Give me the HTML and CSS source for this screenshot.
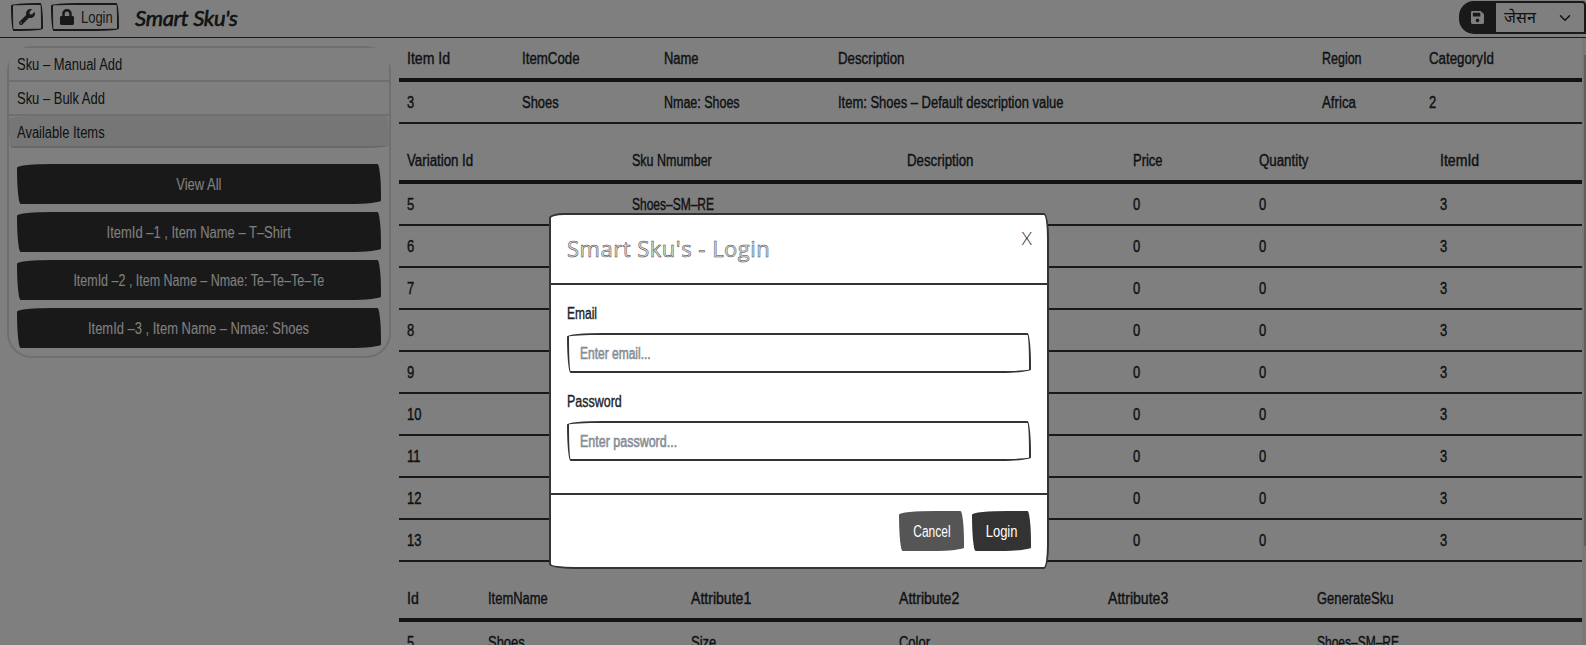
FILE: index.html
```html
<!DOCTYPE html>
<html lang="en">
<head>
<meta charset="utf-8">
<title>Smart Sku's</title>
<link rel="stylesheet" href="styles.css">
</head>
<body>
<header class="navbar">
  <button class="tool" aria-label="Settings"><svg class="icon" width="16" height="16" viewBox="0 0 512 512"><path fill="currentColor" d="M507.7 109.100c-2.200-9-13.500-12.100-20.100-5.500l-74.400 74.400-67.900-11.300L334 98.800l74.400-74.400c6.600-6.600 3.400-17.900-5.700-20.200-47.400-11.700-99.600.9-136.600 37.900-39.600 39.600-50.500 97.100-34.100 147.200L18.700 402.800c-25 25-25 65.500 0 90.500 25 25 65.500 25 90.500 0l213.200-213.200c50.100 16.700 107.500 5.700 147.400-34.200 37.100-37.100 49.700-89.300 37.900-136.800zM64 472c-13.300 0-24-10.700-24-24 0-13.300 10.700-24 24-24s24 10.700 24 24c0 13.300-10.700 24-24 24z"/></svg></button>
  <button class="tool tool-login"><svg class="icon" width="14" height="16" viewBox="0 0 448 512"><path fill="currentColor" d="M400 224h-24v-72C376 68.200 307.800 0 224 0S72 68.200 72 152v72H48c-26.500 0-48 21.500-48 48v192c0 26.500 21.500 48 48 48h352c26.500 0 48-21.500 48-48V272c0-26.500-21.500-48-48-48zm-104 0H152v-72c0-39.700 32.300-72 72-72s72 32.300 72 72v72z"/></svg><span class="t">Login</span></button>
  <span class="brand">Smart Sku's</span>
  <div class="theme">
    <span class="theme-save"><svg width="13" height="13" viewBox="0 0 448 448"><path fill="currentColor" fill-rule="evenodd" d="M434 98 350 14C341 5 329 0 316 0H48C21 0 0 21 0 48v352c0 27 21 48 48 48h352c27 0 48-21 48-48V132c0-13-5-25-14-34zM224 384a64 64 0 1 1 0-128 64 64 0 0 1 0 128zM320 80v100c0 7-5 12-12 12H76c-7 0-12-5-12-12V76c0-7 5-12 12-12h228c9 0 16 7 16 16z"/></svg></span>
    <span class="theme-select"><span>जेसन</span><svg width="12" height="12" viewBox="0 0 16 16"><path fill="none" stroke="currentColor" stroke-width="2" stroke-linecap="round" stroke-linejoin="round" d="m2 5 6 6 6-6"/></svg></span>
  </div>
</header>
<div class="page">
  <aside class="sidebar">
    <div class="side-item"><span class="t">Sku – Manual Add</span></div>
    <div class="side-item"><span class="t">Sku – Bulk Add</span></div>
    <div class="side-item active"><span class="t">Available Items</span></div>
    <div class="side-body">
      <button class="btn wide"><span class="t">View All</span></button>
      <button class="btn wide"><span class="t">ItemId –1 , Item Name – T–Shirt</span></button>
      <button class="btn wide"><span class="t narrow">ItemId –2 , Item Name – Nmae: Te–Te–Te–Te</span></button>
      <button class="btn wide"><span class="t">ItemId –3 , Item Name – Nmae: Shoes</span></button>
    </div>
  </aside>
  <main class="content">
    <table class="items">
      <colgroup><col><col><col><col><col><col></colgroup>
      <thead><tr><th><span class="t roomy">Item Id</span></th><th><span class="t mid">ItemCode</span></th><th><span class="t">Name</span></th><th><span class="t mid">Description</span></th><th><span class="t narrow">Region</span></th><th><span class="t mid">CategoryId</span></th></tr></thead>
      <tbody><tr><td><span class="t">3</span></td><td><span class="t">Shoes</span></td><td><span class="t narrow">Nmae: Shoes</span></td><td><span class="t">Item: Shoes – Default description value</span></td><td><span class="t mid">Africa</span></td><td><span class="t">2</span></td></tr></tbody>
    </table>
    <table class="variations">
      <colgroup><col><col><col><col><col><col></colgroup>
      <thead><tr><th><span class="t mid">Variation Id</span></th><th><span class="t narrow">Sku Nmumber</span></th><th><span class="t mid">Description</span></th><th><span class="t">Price</span></th><th><span class="t mid">Quantity</span></th><th><span class="t roomy">ItemId</span></th></tr></thead>
      <tbody>
        <tr><td><span class="t">5</span></td><td><span class="t tight">Shoes–SM–RE</span></td><td></td><td><span class="t">0</span></td><td><span class="t">0</span></td><td><span class="t">3</span></td></tr>
        <tr><td><span class="t">6</span></td><td></td><td></td><td><span class="t">0</span></td><td><span class="t">0</span></td><td><span class="t">3</span></td></tr>
        <tr><td><span class="t">7</span></td><td></td><td></td><td><span class="t">0</span></td><td><span class="t">0</span></td><td><span class="t">3</span></td></tr>
        <tr><td><span class="t">8</span></td><td></td><td></td><td><span class="t">0</span></td><td><span class="t">0</span></td><td><span class="t">3</span></td></tr>
        <tr><td><span class="t">9</span></td><td></td><td></td><td><span class="t">0</span></td><td><span class="t">0</span></td><td><span class="t">3</span></td></tr>
        <tr><td><span class="t">10</span></td><td></td><td></td><td><span class="t">0</span></td><td><span class="t">0</span></td><td><span class="t">3</span></td></tr>
        <tr><td><span class="t">11</span></td><td></td><td></td><td><span class="t">0</span></td><td><span class="t">0</span></td><td><span class="t">3</span></td></tr>
        <tr><td><span class="t">12</span></td><td></td><td></td><td><span class="t">0</span></td><td><span class="t">0</span></td><td><span class="t">3</span></td></tr>
        <tr><td><span class="t">13</span></td><td></td><td></td><td><span class="t">0</span></td><td><span class="t">0</span></td><td><span class="t">3</span></td></tr>
      </tbody>
    </table>
    <table class="attributes">
      <colgroup><col><col><col><col><col><col></colgroup>
      <thead><tr><th><span class="t roomy">Id</span></th><th><span class="t">ItemName</span></th><th><span class="t roomy">Attribute1</span></th><th><span class="t roomy">Attribute2</span></th><th><span class="t roomy">Attribute3</span></th><th><span class="t">GenerateSku</span></th></tr></thead>
      <tbody><tr><td><span class="t">5</span></td><td><span class="t">Shoes</span></td><td><span class="t">Size</span></td><td><span class="t">Color</span></td><td></td><td><span class="t tight">Shoes–SM–RE</span></td></tr></tbody>
    </table>
  </main>
  <div class="scrollbar"><div class="thumb"></div></div>
</div>
<div class="backdrop">
  <section class="modal">
    <div class="modal-header"><h5 class="modal-title">Smart Sku's - Login</h5><span class="close">X</span></div>
    <div class="modal-body">
      <div class="label"><span class="t tight">Email</span></div>
      <div class="input"><span class="t tight">Enter email...</span></div>
      <div class="label"><span class="t narrow">Password</span></div>
      <div class="input"><span class="t narrow">Enter password...</span></div>
    </div>
    <div class="modal-footer"><button class="btn secondary"><span class="t tight">Cancel</span></button><button class="btn submit"><span class="t">Login</span></button></div>
  </section>
</div>
</body>
</html>
```
FILE: styles.css
```css
* { box-sizing: border-box; }
body {
  margin: 0; height: 645px; overflow: hidden; background: #fff; color: #212529;
  font: 16px/24px "Liberation Sans", sans-serif;
}
button { font: inherit; }
svg { flex: none; }
/* condensed lettering */
.t { display: inline-block; white-space: nowrap; transform: translateY(.5px) scaleX(.81); transform-origin: 0 50%; }
.t.tight { transform: translateY(.5px) scaleX(.75); }
.t.narrow { transform: translateY(.5px) scaleX(.78); }
.t.mid { transform: translateY(.5px) scaleX(.83); }
.t.roomy { transform: translateY(.5px) scaleX(.88); }
.navbar { display: flex; align-items: flex-start; height: 38px; padding: 3px 0 0 11px; border-bottom: 1px solid #333; }
.tool {
  display: flex; align-items: center; justify-content: center; width: 32px; height: 28px; margin-right: 8px; padding: 0;
  border: 2px solid #333; background: #fff; color: #333;
  border-radius: 255px 25px 225px 25px / 25px 225px 25px 255px;
}
.tool-login { justify-content: flex-start; width: 68px; gap: 7px; padding-left: 7px; margin-right: 16px; }
.brand { font: italic 400 22px/29px Lato, sans-serif; letter-spacing: -.3px; -webkit-text-stroke: .6px; }
.theme { display: flex; width: 127px; height: 33px; margin: -2px 0 0 auto; }
.theme-save { display: flex; align-items: center; justify-content: center; width: 37px; background: #333; color: #fff; border-radius: 15px 0 0 15px; }
.theme-select {
  display: flex; align-items: center; justify-content: space-between; flex: 1; padding: 0 13px 0 8px;
  border: 2px solid #333; border-left: 0; border-radius: 0 4px 0 0;
}
.page { display: flex; height: 607px; overflow: hidden; }
.sidebar { width: 384px; height: 312px; margin: 8px 8px 0 7px; border: 2px solid #dfdfdf; border-radius: 25px; }
.side-item { height: 34px; padding: 4px 8px; background: #fff; border-bottom: 2px solid #dfdfdf; }
.side-item.active { height: 32px; background: #ececec; border-color: #d2d2d2; border-radius: 255px 25px 225px 25px / 25px 225px 25px 255px; }
.side-body { display: flex; flex-direction: column; gap: 8px; padding: 16px 8px 8px; }
.btn {
  display: flex; align-items: center; justify-content: center; height: 40px; padding: 0; border: 0; background: #333; color: #fff;
  border-radius: 255px 25px 225px 25px / 25px 225px 25px 255px;
}
.btn .t { transform-origin: 50% 50%; }
.wide { width: 100%; }
.secondary { width: 65px; background: #555; }
.submit { width: 59px; }
.content { width: 1183px; }
table { width: 1183px; table-layout: fixed; border-collapse: separate; border-spacing: 0; margin-bottom: 16px; }
th, td { height: 42px; padding: 8px 7.5px; text-align: left; font-weight: 400; border-bottom: 2px solid #333; white-space: nowrap; -webkit-text-stroke: .4px; }
th { height: 44px; border-bottom: 4px solid #212529; }
.items col:nth-child(1) { width: 115px; }
.items col:nth-child(2) { width: 142px; }
.items col:nth-child(3) { width: 174px; }
.items col:nth-child(4) { width: 484px; }
.items col:nth-child(5) { width: 107px; }
.variations col:nth-child(1) { width: 225px; }
.variations col:nth-child(2) { width: 275px; }
.variations col:nth-child(3) { width: 226px; }
.variations col:nth-child(4) { width: 126px; }
.variations col:nth-child(5) { width: 181px; }
.attributes col:nth-child(1) { width: 81px; }
.attributes col:nth-child(2) { width: 203px; }
.attributes col:nth-child(3) { width: 208px; }
.attributes col:nth-child(4) { width: 209px; }
.attributes col:nth-child(5) { width: 209px; }
.scrollbar { width: 4px; padding: 17px 0 0 2px; background: #f1f1f1; }
.thumb { height: 491px; background: #c1c1c1; }
.backdrop { position: absolute; inset: 0; display: flex; align-items: flex-start; padding: 213px 0 0 549px; background: rgba(0, 0, 0, .5); }
.modal { width: 500px; height: 356px; border: 2px solid #333; background: #fff; border-radius: 15px 5px 5px 25px / 5px 25px 25px 5px; }
.modal-header { display: flex; justify-content: space-between; height: 70px; padding: 16px; border-bottom: 2px solid #333; }
.modal-title { margin: 0; font: 400 22px/34px "Open Sans", sans-serif; letter-spacing: .5px; color: #ddd; -webkit-text-stroke: .5px #444; }
.close { margin-right: -1px; font: 300 17px/15px Lato, sans-serif; }
.modal-body { height: 210px; padding: 16px; border-bottom: 2px solid #333; }
.label { margin-bottom: 8px; -webkit-text-stroke: .4px; }
.input {
  height: 40px; margin-bottom: 16px; padding: 6px 11px; color: #868e96; -webkit-text-stroke: .6px;
  border: 2px solid #333; background: #fff; border-radius: 255px 25px 225px 25px / 25px 225px 25px 255px;
}
.modal-footer { display: flex; justify-content: flex-end; gap: 8px; padding: 16px; }
```
